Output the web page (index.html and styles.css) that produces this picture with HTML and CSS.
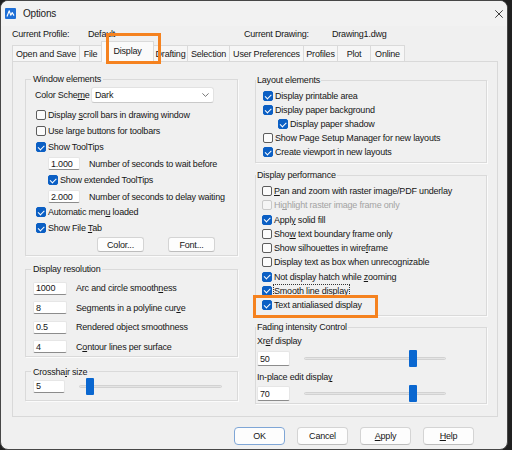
FILE: index.html
```html
<!DOCTYPE html>
<html>
<head>
<meta charset="utf-8">
<title>Options</title>
<link rel="stylesheet" href="styles.css">
</head>
<body>
<div class="window">
  <div class="titlebar">
    <svg class="appicon" width="11" height="11" viewBox="0 0 11 11">
      <rect width="11" height="11" rx="1" fill="#1f6fd6"/>
      <path d="M2 8.5 L4.2 2.8 L5.8 7.2 L7.2 4.6 L9 7.6" fill="none" stroke="#ffffff" stroke-width="1.1" stroke-linejoin="round"/>
    </svg>
    <span class="title">Options</span>
    <svg class="close" width="8" height="8" viewBox="0 0 8 8">
      <path d="M0.3 0.3 L7.7 7.7 M7.7 0.3 L0.3 7.7" stroke="#2a2a2a" stroke-width="0.9"/>
    </svg>
  </div>

  <div class="profile">
    <span class="p-label">Current Profile:</span>
    <span class="p-value">Default</span>
    <span class="p-label2">Current Drawing:</span>
    <span>Drawing1.dwg</span>
  </div>

  <div class="tabs">
    <div class="tab t-open">Open and Save</div>
    <div class="tab t-file">File</div>
    <div class="tab t-display active">Display</div>
    <div class="tab t-drafting">Drafting</div>
    <div class="tab t-selection">Selection</div>
    <div class="tab t-user">User Preferences</div>
    <div class="tab t-profiles">Profiles</div>
    <div class="tab t-plot">Plot</div>
    <div class="tab t-online">Online</div>
  </div>

  <div class="panel">
    <div class="col col-left">
      <fieldset class="grp g-window">
        <legend>Window elements</legend>
        <div class="row sel-row">
          <span class="lbl-cs">Color Sche<u>m</u>e</span>
          <div class="select">
            <span>Dark</span>
            <svg class="chev" width="7" height="4" viewBox="0 0 7 4"><path d="M0.4 0.4 L3.5 3.4 L6.6 0.4" fill="none" stroke="#555" stroke-width="0.8"/></svg>
          </div>
        </div>
        <div class="row r16 mt4"><span class="cb"></span><span>Display <u>s</u>croll bars in drawing window</span></div>
        <div class="row r16"><span class="cb"></span><span>Use large buttons for toolbars</span></div>
        <div class="row r16"><span class="cb on"></span><span>Show ToolTips</span></div>
        <div class="row r15 mt1 ind"><span class="field w32">1.000</span><span class="flbl">Number of seconds to wait before</span></div>
        <div class="row r16 mt1 ind"><span class="cb on"></span><span>Show extended ToolTips</span></div>
        <div class="row r15 mt1 ind"><span class="field w32">2.000</span><span class="flbl">Number of seconds to delay waiting</span></div>
        <div class="row r16"><span class="cb on"></span><span>Automatic men<u>u</u> loaded</span></div>
        <div class="row r16"><span class="cb on"></span><span>Show File <u>T</u>ab</span></div>
        <div class="btnrow">
          <button class="btn b-small">Color...</button>
          <button class="btn b-small">Font...</button>
        </div>
      </fieldset>

      <fieldset class="grp g-res">
        <legend>Display resolution</legend>
        <div class="res-rows">
          <div class="row r14"><span class="field w34">1000</span><span class="rlbl">Arc and circle smooth<u>n</u>ess</span></div>
          <div class="row r14"><span class="field w34">8</span><span class="rlbl">Segments in a polyline cur<u>v</u>e</span></div>
          <div class="row r14"><span class="field w34">0.5</span><span class="rlbl">Rendered object smoothness</span></div>
          <div class="row r14"><span class="field w34">4</span><span class="rlbl">C<u>o</u>ntour lines per surface</span></div>
        </div>
      </fieldset>

      <fieldset class="grp g-cross">
        <legend>Crossha<u>i</u>r size</legend>
        <div class="row r17 slider-row">
          <span class="field w32">5</span>
          <div class="track tr-cross"><span class="thumb" style="left:6px"></span></div>
        </div>
      </fieldset>
    </div>

    <div class="col col-right">
      <fieldset class="grp g-layout">
        <legend>Layout elements</legend>
        <div class="rows14 mt3">
          <div class="row r14"><span class="cb on"></span><span>Display printable area</span></div>
          <div class="row r14"><span class="cb on"></span><span>Display paper background</span></div>
          <div class="row r14 sub"><span class="cb on"></span><span>Display paper shadow</span></div>
          <div class="row r14"><span class="cb"></span><span>Show Page Setup Manager for new layouts</span></div>
          <div class="row r14"><span class="cb on"></span><span>Create viewport in new layouts</span></div>
        </div>
      </fieldset>

      <fieldset class="grp g-perf">
        <legend>Display performance</legend>
        <div class="perf-rows">
          <div class="row rp"><span class="cb"></span><span><u>P</u>an and zoom with raster image/PDF underlay</span></div>
          <div class="row rp disabled"><span class="cb"></span><span>Hi<u>g</u>hlight raster image frame only</span></div>
          <div class="row rp"><span class="cb on"></span><span>Appl<u>y</u> solid fill</span></div>
          <div class="row rp"><span class="cb"></span><span>Sho<u>w</u> text boundary frame only</span></div>
          <div class="row rp"><span class="cb"></span><span>Show silhouettes in wire<u>f</u>rame</span></div>
          <div class="row rp"><span class="cb"></span><span>Display text as box when unrecognizable</span></div>
          <div class="row rp"><span class="cb on"></span><span>Not display hatch while <u>z</u>ooming</span></div>
          <div class="row rp"><span class="cb on"></span><span class="focus">Smooth line display</span></div>
          <div class="row rp"><span class="cb on"></span><span>Text antialiased display</span></div>
        </div>
      </fieldset>

      <fieldset class="grp g-fade">
        <legend>Fading intensity Control</legend>
        <div class="row r14 mt1"><span>Xr<u>e</u>f display</span></div>
        <div class="row r17 mt2">
          <span class="field w33 h15">50</span>
          <div class="track tr-fade"><span class="thumb" style="left:104px"></span></div>
        </div>
        <div class="row r14 mt3"><span>In-place edit displa<u>y</u></span></div>
        <div class="row r17 mt1">
          <span class="field w33 h15">70</span>
          <div class="track tr-fade"><span class="thumb" style="left:104px"></span></div>
        </div>
      </fieldset>
    </div>
  </div>

  <div class="actions">
    <button class="btn b-main default">OK</button>
    <button class="btn b-main">Cancel</button>
    <button class="btn b-main"><span><u>A</u>pply</span></button>
    <button class="btn b-main"><span><u>H</u>elp</span></button>
  </div>

  <div class="mark mark-tab"></div>
  <div class="mark mark-text"></div>
</div>
</body>
</html>
```

FILE: styles.css
```css
* { box-sizing: border-box; }

html, body {
  margin: 0;
  padding: 0;
}

body {
  width: 512px;
  height: 450px;
  overflow: hidden;
  background: #202020;
  font-family: "Liberation Sans", Arial, sans-serif;
  font-size: 9px;
  letter-spacing: -0.2px;
  color: #161616;
}

u {
  text-decoration-thickness: 1px;
  text-underline-offset: 1px;
}

.window {
  position: relative;
  width: 508px;
  height: 450px;
  background: #f0f0f0;
  border: 1px solid #474747;
  border-radius: 8px;
  overflow: hidden;
  display: flex;
  flex-direction: column;
}

/* title bar */
.titlebar {
  height: 25px;
  flex: none;
  display: flex;
  align-items: center;
  padding: 0 4px;
  background: #f2f2f2;
}

.title {
  margin-left: 7px;
  font-size: 10px;
  color: #1a1a1a;
}

.close { margin-left: auto; }

/* profile line */
.profile {
  height: 15px;
  flex: none;
  display: flex;
  align-items: center;
  padding-left: 11px;
}

.p-label { width: 76px; }
.p-value { width: 156px; }
.p-label2 { width: 88px; }

/* tabs */
.tabs {
  height: 20px;
  flex: none;
  display: flex;
  align-items: flex-end;
  padding-left: 11px;
}

.tab {
  height: 16px;
  display: flex;
  align-items: center;
  justify-content: center;
  background: #f6f6f6;
  border: 1px solid #dadada;
  border-bottom: none;
  margin-right: -1px;
  white-space: nowrap;
}

.tab.active {
  height: 21px;
  margin-bottom: -1px;
  background: #fafafa;
  position: relative;
  z-index: 2;
  padding-bottom: 2px;
}

.t-open { width: 68px; }
.t-file { width: 23px; }
.t-display { width: 53px; }
.t-drafting { width: 35px; }
.t-selection { width: 43px; }
.t-user { width: 75px; }
.t-profiles { width: 35px; }
.t-plot { width: 34px; }
.t-online { width: 35px; }

/* panel */
.panel {
  flex: none;
  margin-left: 11px;
  width: 486px;
  height: 356px;
  border: 1px solid #d9d9d9;
  background: #f0f0f0;
  display: flex;
  gap: 17px;
  padding: 11px 10px 0 12px;
}

.col {
  display: flex;
  flex-direction: column;
}

.col-left { width: 213px; }
.col-right { width: 232px; margin-top: 1px; }

.grp {
  margin: 0;
  min-width: 0;
  border: 1px solid #dadada;
  box-shadow: 1px 1px 0 #fbfbfb;
}

.grp legend {
  line-height: 12px;
  height: 12px;
  padding: 0 2px;
}

.g-window { padding: 0 10px 3px 10px; }
.g-window legend { margin-left: -5px; }

.g-res { margin-top: 7px; padding: 0 7px 2.5px 7px; }
.g-res legend { margin-left: -2px; }

.g-cross { margin-top: 8.5px; padding: 0 7px 5px 7px; }
.g-cross legend { margin-left: -2px; }

.g-layout { padding: 0 7px 3px 7px; }
.g-layout legend { margin-left: -7px; padding: 0 1px; }

.g-perf { margin-top: 6px; padding: 0 6px 3px 6px; }
.g-perf legend { margin-left: -6px; padding: 0 1px; }

.g-fade { margin-top: 5px; padding: 0 6px 1px 1px; }
.g-fade legend { margin-left: -1px; padding: 0 1px; }

/* rows */
.row {
  display: flex;
  align-items: center;
  white-space: nowrap;
}

.r14 { height: 14px; }
.r15 { height: 15px; }
.r16 { height: 16px; }
.r17 { height: 17px; }
.rp { height: 14.25px; }

.mt1 { margin-top: 1px; }
.mt2 { margin-top: 2px; }
.mt3 { margin-top: 3px; }
.mt4 { margin-top: 4px; }

.ind { padding-left: 12px; }
.sub { padding-left: 15px; }

.sel-row { height: 16px; margin-top: 2px; }
.lbl-cs { width: 56px; margin-left: -1px; }

.select {
  width: 123px;
  height: 16px;
  background: #ffffff;
  border: 1px solid #e2e2e2;
  border-bottom-color: #c9c9c9;
  border-radius: 3px;
  display: flex;
  align-items: center;
  justify-content: space-between;
  padding: 0 4px 0 3px;
}

/* checkboxes */
.cb {
  flex: none;
  width: 10px;
  height: 10px;
  margin-right: 2px;
  border: 1px solid #5c5c5c;
  border-radius: 2px;
  background: #fbfbfb;
  display: inline-flex;
  align-items: center;
  justify-content: center;
}

.cb.on {
  background: #0b5fc4;
  border-color: #0b5fc4;
}

.cb.on::after {
  content: "";
  width: 5px;
  height: 2.5px;
  border-left: 1.1px solid #ffffff;
  border-bottom: 1.1px solid #ffffff;
  transform: rotate(-45deg);
  margin-top: -1.5px;
}

.disabled { color: #a3a3a3; }
.disabled .cb { border-color: #c9c9c9; background: #f5f5f5; }

.focus {
  outline: 1px dotted #333;
  outline-offset: 0;
  padding: 0 1px 0 0;
  line-height: 12px;
}

/* fields */
.field {
  flex: none;
  height: 13px;
  background: #ffffff;
  border: 1px solid #e6e6e6;
  border-bottom-color: #8c8c8c;
  border-radius: 2px;
  display: inline-flex;
  align-items: center;
  padding-left: 2px;
}

.w32 { width: 32px; }
.w33 { width: 33px; }
.w34 { width: 34px; }
.h15 { height: 15px; }

.flbl { margin-left: 9px; }
.rlbl { margin-left: 9px; }

.res-rows {
  margin-top: 6px;
  display: flex;
  flex-direction: column;
  gap: 5.5px;
}

.perf-rows { margin-top: 3px; }

/* buttons */
.btn {
  font-family: inherit;
  font-size: 9px;
  letter-spacing: -0.2px;
  color: #161616;
  background: #fdfdfd;
  border: 1px solid #d4d4d4;
  border-bottom-color: #bdbdbd;
  border-radius: 3px;
  padding: 0;
  margin: 0;
  display: inline-flex;
  align-items: center;
  justify-content: center;
}

.btnrow {
  margin-top: 1px;
  height: 15px;
  display: flex;
  gap: 24px;
  padding-left: 61px;
}

.b-small { width: 47px; height: 15px; }

.actions {
  flex: none;
  margin-top: 10px;
  height: 18px;
  display: flex;
  justify-content: flex-end;
  gap: 12px;
  padding-right: 33px;
}

.b-main { width: 51px; height: 18px; border-radius: 4px; }
.b-main.default { border-color: #7fa6d6; }

/* sliders */
.track {
  position: relative;
  height: 3px;
  background: #e4e4e4;
  border: 1px solid #d2d2d2;
  border-radius: 2px;
  margin-left: 14px;
}

.tr-cross { width: 143px; }
.tr-fade { width: 142px; }

.thumb {
  position: absolute;
  top: -8px;
  width: 8px;
  height: 17px;
  background: #0a67d0;
  border-radius: 1px;
}

/* annotation marks */
.mark {
  position: absolute;
  border: 3px solid #f5821f;
  z-index: 5;
}

.mark-tab { left: 105px; top: 32px; width: 55px; height: 31px; }
.mark-text { left: 252px; top: 294px; width: 125px; height: 23px; }
```
